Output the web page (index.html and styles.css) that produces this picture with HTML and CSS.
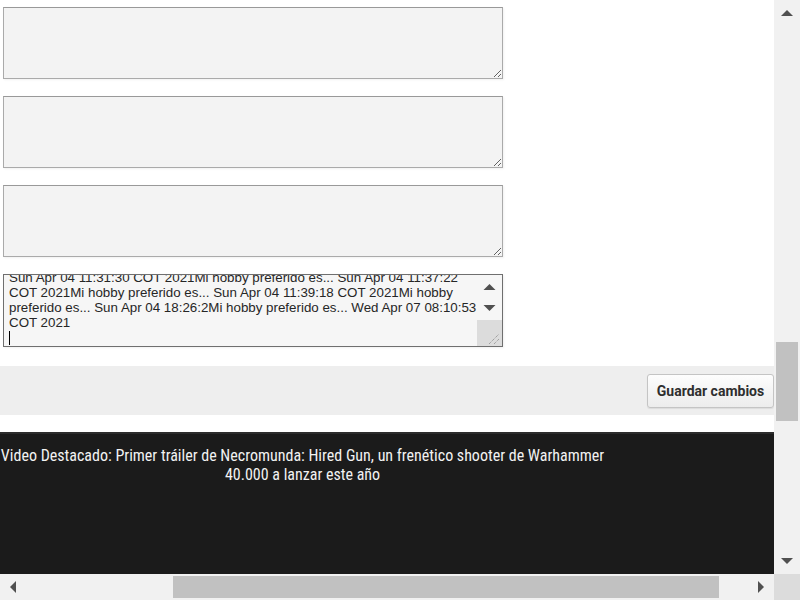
FILE: index.html
```html
<!DOCTYPE html>
<html lang="es">
<head>
<meta charset="utf-8">
<title>Perfil</title>
<link rel="stylesheet" href="styles.css">
</head>
<body>
<div class="frame">
  <div class="viewport">
    <div class="fields">
      <textarea class="field"></textarea>
      <textarea class="field"></textarea>
      <textarea class="field"></textarea>
      <div class="field field-filled">
        <div class="field-text">
          <div class="line">Sun Apr 04 11:31:30 COT 2021Mi hobby preferido es... Sun Apr 04 11:37:22</div>
          <div class="line">COT 2021Mi hobby preferido es... Sun Apr 04 11:39:18 COT 2021Mi hobby</div>
          <div class="line">preferido es... Sun Apr 04 18:26:2Mi hobby preferido es... Wed Apr 07 08:10:53</div>
          <div class="line">COT 2021</div>
          <div class="line"><span class="caret"></span></div>
        </div>
        <div class="mini-bar">
          <svg class="mini-arrow" width="25" height="20" viewBox="0 0 25 20"><path d="M6.5 13 L12.5 7 L18.5 13 Z" fill="#505050"/></svg>
          <svg class="mini-arrow" width="25" height="20" viewBox="0 0 25 20"><path d="M6.5 7 L18.5 7 L12.5 13 Z" fill="#505050"/></svg>
          <div class="mini-thumb">
            <svg width="25" height="26" viewBox="0 0 25 26"><path d="M12 24 L22 14 M17 24 L22 19" stroke="#888" stroke-width="1" stroke-dasharray="1 1"/></svg>
          </div>
        </div>
      </div>
    </div>
    <div class="actions">
      <button class="btn" type="button">Guardar cambios</button>
    </div>
    <div class="video">
      <h2 class="video-title">Video Destacado: Primer tráiler de Necromunda: Hired Gun, un frenético shooter de Warhammer 40.000 a lanzar este año</h2>
    </div>
  </div>
  <div class="vbar">
    <svg width="26" height="26" viewBox="0 0 26 26"><path d="M7 16 L13 10 L19 16 Z" fill="#505050"/></svg>
    <div class="vtrack"><div class="vthumb"></div></div>
    <svg width="26" height="26" viewBox="0 0 26 26"><path d="M7 10 L19 10 L13 16 Z" fill="#505050"/></svg>
  </div>
  <div class="hbar">
    <svg width="26" height="26" viewBox="0 0 26 26"><path d="M16 7 L16 19 L10 13 Z" fill="#505050"/></svg>
    <div class="htrack"><div class="hthumb"></div></div>
    <svg width="26" height="26" viewBox="0 0 26 26"><path d="M10 7 L10 19 L16 13 Z" fill="#505050"/></svg>
  </div>
  <div class="corner"></div>
</div>
</body>
</html>
```

FILE: styles.css
```css
html, body {
  margin: 0;
  padding: 0;
  overflow: hidden;
}

body {
  font-family: "Liberation Sans", Arial, sans-serif;
  background: #ffffff;
}

.frame {
  display: grid;
  grid-template-columns: 774px 26px;
  grid-template-rows: 574px 26px;
  width: 800px;
  height: 600px;
}

.viewport {
  overflow: hidden;
  display: flex;
  flex-direction: column;
  background: #ffffff;
}

.fields {
  display: flex;
  flex-direction: column;
  gap: 17px;
  padding: 7px 0 0 3px;
}

.field {
  box-sizing: border-box;
  display: block;
  width: 500px;
  height: 72px;
  margin: 0;
  padding: 4px 5px;
  background: #f3f3f3;
  border: 1px solid #aaaaaa;
  border-top-color: #999999;
  border-radius: 0;
  box-shadow: 1px 1px 2px rgba(0, 0, 0, 0.06);
  font-family: "Liberation Sans", Arial, sans-serif;
  font-size: 13.33px;
  resize: vertical;
}

.field-filled {
  display: flex;
  padding: 0;
  border-color: #6f6f6f;
  background: #f6f6f6;
  color: #262626;
  height: 73px;
}

.field-text {
  flex: 1;
  display: flex;
  flex-direction: column;
  justify-content: flex-end;
  overflow: hidden;
  padding: 0 0 1px 5px;
  line-height: 15px;
}

.line {
  white-space: nowrap;
  height: 15px;
}

.caret {
  display: inline-block;
  width: 1px;
  height: 14px;
  background: #000;
  vertical-align: top;
  margin-top: 1px;
}

.mini-bar {
  width: 25px;
  display: flex;
  flex-direction: column;
  align-items: center;
  padding-top: 2px;
  gap: 1px;
}

.mini-arrow {
  display: block;
  width: 25px;
}

.mini-thumb {
  margin-top: auto;
  width: 25px;
  height: 26px;
  background: #dcdcdc;
}

.mini-thumb svg {
  display: block;
}

.actions {
  margin-top: 19px;
  height: 49px;
  background: #eeeeee;
  display: flex;
  justify-content: flex-end;
  align-items: flex-start;
  padding-top: 8px;
  box-sizing: border-box;
}

.btn {
  height: 34px;
  width: 127px;
  padding: 0;
  margin: 0;
  border: 1px solid #c4c4c4;
  border-radius: 3px;
  background: linear-gradient(#fdfdfd, #ececec);
  font-family: Roboto, "Liberation Sans", sans-serif;
  font-weight: 700;
  font-size: 14px;
  color: #2e2e2e;
  box-shadow: 0 1px 1px rgba(0, 0, 0, 0.08);
}

.video {
  margin-top: 17px;
  flex: 1;
  background: #1b1b1b;
  border-top: 2px solid #2c2c2c;
}

.video-title {
  margin: 0;
  width: 605px;
  padding-top: 12px;
  text-align: center;
  color: #f2f2f2;
  font-family: "Roboto Condensed", Roboto, sans-serif;
  font-stretch: condensed;
  font-weight: normal;
  font-size: 16px;
  line-height: 19px;
}

.vbar {
  background: #f1f1f1;
  display: flex;
  flex-direction: column;
}

.vbar svg, .hbar svg {
  display: block;
  flex: none;
}

.vtrack {
  flex: 1;
  padding-top: 316px;
}

.vthumb {
  margin-left: 2px;
  width: 22px;
  height: 79px;
  background: #c1c1c1;
}

.hbar {
  background: #f1f1f1;
  display: flex;
}

.htrack {
  flex: 1;
  padding-left: 147px;
  padding-top: 2px;
}

.hthumb {
  width: 546px;
  height: 22px;
  background: #c1c1c1;
}

.corner {
  background: #dcdcdc;
}
```
